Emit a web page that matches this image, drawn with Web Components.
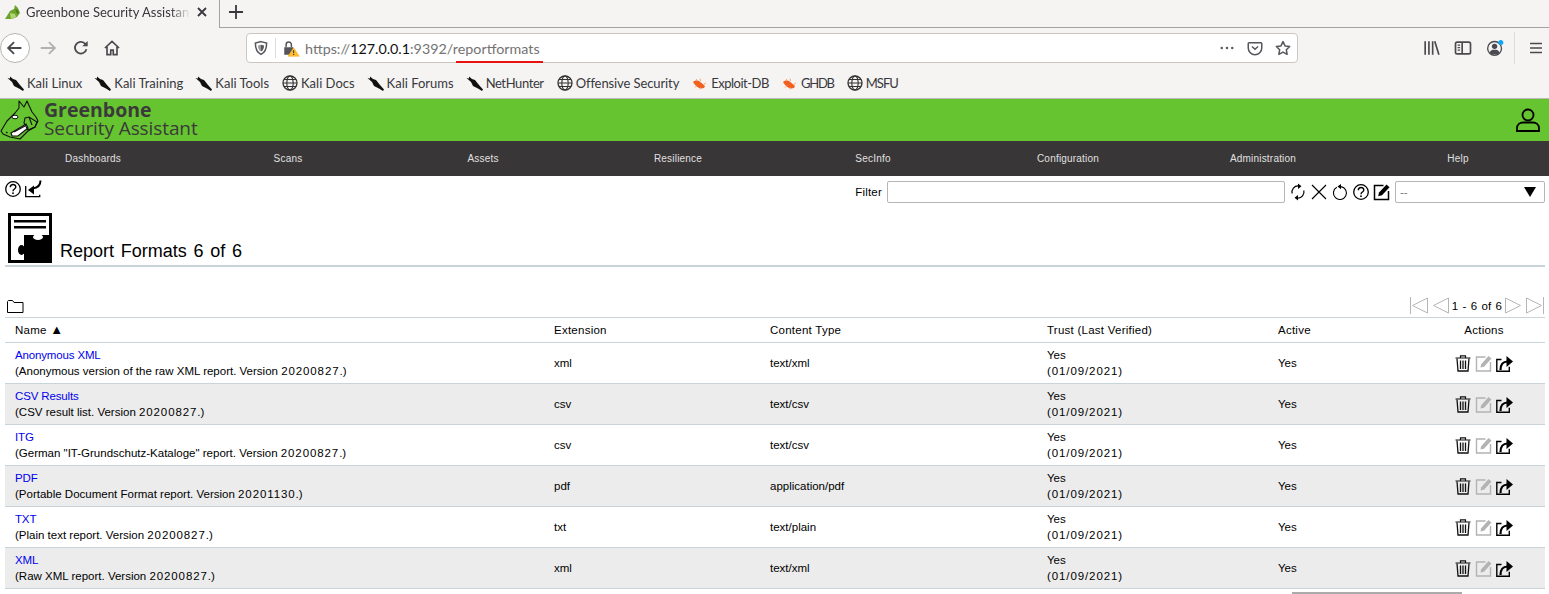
<!DOCTYPE html>
<html lang="en">
<head>
<meta charset="utf-8">
<title>Greenbone Security Assistant</title>
<style>
    html, body { margin: 0; height: 594px; overflow: hidden; background: white; }
    body { font-family: "Liberation Sans", Arial, sans-serif; }
</style>
</head>
<body>
<fx-tabbar title-text="Greenbone Security Assistant"></fx-tabbar>
<fx-navbar></fx-navbar>
<fx-bookmarks>
    <fx-bookmark icon="kali">Kali Linux</fx-bookmark>
    <fx-bookmark icon="kali">Kali Training</fx-bookmark>
    <fx-bookmark icon="kali">Kali Tools</fx-bookmark>
    <fx-bookmark icon="globe">Kali Docs</fx-bookmark>
    <fx-bookmark icon="kali">Kali Forums</fx-bookmark>
    <fx-bookmark icon="kali" style="letter-spacing:-.4px">NetHunter</fx-bookmark>
    <fx-bookmark icon="globe" style="letter-spacing:-.1px">Offensive Security</fx-bookmark>
    <fx-bookmark icon="bug" style="letter-spacing:-.5px">Exploit-DB</fx-bookmark>
    <fx-bookmark icon="bug" style="letter-spacing:-1.200px">GHDB</fx-bookmark>
    <fx-bookmark icon="globe" style="letter-spacing:-1px">MSFU</fx-bookmark>
</fx-bookmarks>
<gsa-header></gsa-header>
<gsa-menu>
    <span>Dashboards</span><span>Scans</span><span>Assets</span><span>Resilience</span>
    <span>SecInfo</span><span>Configuration</span><span>Administration</span><span>Help</span>
</gsa-menu>
<gsa-toolbar></gsa-toolbar>
<gsa-title>Report Formats 6 of 6</gsa-title>
<gsa-pager></gsa-pager>
<format-table>
    <format-row name="Anonymous XML" ext="xml" type="text/xml" version="20200827">(Anonymous version of the raw XML report. Version </format-row>
    <format-row name="CSV Results" ext="csv" type="text/csv" version="20200827">(CSV result list. Version </format-row>
    <format-row name="ITG" ext="csv" type="text/csv" version="20200827">(German "IT-Grundschutz-Kataloge" report. Version </format-row>
    <format-row name="PDF" ext="pdf" type="application/pdf" version="20201130">(Portable Document Format report. Version </format-row>
    <format-row name="TXT" ext="txt" type="text/plain" version="20200827">(Plain text report. Version </format-row>
    <format-row name="XML" ext="xml" type="text/xml" version="20200827">(Raw XML report. Version </format-row>
</format-table>
<gsa-dialog-edge></gsa-dialog-edge>

<script>
const ICONS = {
    back: '<path d="M19 12H5M11 5.500 4.500 12 11 18.500" fill="none" stroke="#4a4a4f" stroke-width="2"/>',
    forward: '<path d="M4 12h15M13 5.500 19.500 12 13 18.500" fill="none" stroke="#b1b1b3" stroke-width="2"/>',
    reload: '<path d="M18.500 13.500A7 7 0 1 1 16.500 6.500L19 9" fill="none" stroke="#4a4a4f" stroke-width="2.200"/><path d="M20 3.500V10h-6.500z" fill="#4a4a4f"/>',
    home: '<path d="M3.500 12 12 4l8.500 8M6 10.500V20h4.500v-5.500h3V20H18v-9.500" fill="none" stroke="#4a4a4f" stroke-width="2"/>',
    shield: '<path d="M12 3.500 19.500 5.500c0 7-1.500 12-7.500 15-6-3-7.500-8-7.500-15z" fill="none" stroke="#55555a" stroke-width="2"/><path d="M12 7.500 16 8.500c0 3.500-1 6.500-4 8z" fill="#55555a"/><path d="M12 7.500 8 8.500c0 3.500 1 6.500 4 8z" fill="#9a9a9e"/>',
    lock: '<path d="M3 11h12v10H3z" fill="#55555a"/><path d="M5.500 11V7.500a3.500 3.500 0 0 1 7 0V11" fill="none" stroke="#55555a" stroke-width="2"/><path d="M15.500 11.500 23 23H8z" fill="#ffbf2e" stroke="#f5a623" stroke-width=".7"/><path d="M14.800 15h1.400v4h-1.400zM14.800 20h1.400v1.400h-1.400z" fill="#333"/>',
    dots: '<circle cx="5" cy="12" r="1.700" fill="#5b5b5f"/><circle cx="12" cy="12" r="1.700" fill="#5b5b5f"/><circle cx="19" cy="12" r="1.700" fill="#5b5b5f"/>',
    pocket: '<path d="M4 5h16a1 1 0 0 1 1 1v6a9 9 0 0 1-18 0V6a1 1 0 0 1 1-1z" fill="none" stroke="#55555a" stroke-width="2"/><path d="M8 10l4 3.700L16 10" fill="none" stroke="#55555a" stroke-width="2"/>',
    star: '<path d="M12 3.500l2.700 5.700 6.200.8-4.500 4.300 1.100 6.200L12 17.500l-5.500 3 1.100-6.200L3.100 10l6.200-.8z" fill="none" stroke="#55555a" stroke-width="2" stroke-linejoin="round"/>',
    library: '<path d="M5 4v16M9.500 4v16M14 4v16M16.500 4l5 16" fill="none" stroke="#4a4a4f" stroke-width="2"/>',
    sidebar: '<rect x="3" y="5" width="18" height="14" rx="2" fill="none" stroke="#4a4a4f" stroke-width="2"/><path d="M11 5v14" stroke="#4a4a4f" stroke-width="2"/><path d="M5.500 8.500h3M5.500 11.500h3M5.500 14.500h3" stroke="#4a4a4f" stroke-width="1.300"/>',
    account: '<circle cx="11.500" cy="12.500" r="8.300" fill="none" stroke="#4a4a4f" stroke-width="1.600"/><circle cx="11.500" cy="10" r="3.200" fill="#4a4a4f"/><path d="M5.500 18c1-3.500 3-4 6-4s5 .5 6 4c-3 2.500-9 2.500-12 0z" fill="#4a4a4f"/><circle cx="19" cy="5.500" r="3" fill="#0fa7f5"/>',
    menu: '<path d="M4 6h16M4 12h16M4 18h16" stroke="#4a4a4f" stroke-width="2"/>',
    kali: '<path d="M.5 4 3 4.500 3 2.500 6 5 9 6l4 5 4 4.500-1 1.500-4-2.500L7 12 5 8z" fill="#111"/>',
    globe: '<circle cx="9" cy="9" r="7" fill="none" stroke="#333" stroke-width="1.300"/><ellipse cx="9" cy="9" rx="3.200" ry="7" fill="none" stroke="#333" stroke-width="1.100"/><path d="M2 9h14M3 5.500h12M3 12.500h12" stroke="#333" stroke-width="1"/>',
    bug: '<path d="M2 8C5 5.500 8 6.500 10 8.500l4 3.500-1 2C9 15.500 5 13.500 2 8z" fill="#f0611f"/><path d="M5 5l2 2M9 4.500l.5 2.500M4 13.500l2-2M15 9l-2.500 1.500M9 15.500l.5-2" stroke="#f5a67c" stroke-width="1"/>',
    help: '<circle cx="9" cy="9" r="7.300" fill="none" stroke="#000" stroke-width="1.300"/><path d="M6.300 7.200c0-3.600 5.500-3.600 5.500-.2 0 2-2.800 2-2.800 4.200" fill="none" stroke="#000" stroke-width="1.400"/><circle cx="9" cy="13.200" r=".9"/>',
    listback: '<path d="M.7 6v10.700h14v-2" fill="none" stroke="#000" stroke-width="1.300"/><path d="M15.500 .5c0 5-3 7.500-8 8" fill="none" stroke="#000" stroke-width="2"/><path d="M3 10 9 5.500v9z"/>',
    refresh: '<path d="M3.200 10.500A6 6 0 0 1 9.500 3M14.800 7.500A6 6 0 0 1 8.500 15" fill="none" stroke="#000" stroke-width="1.200"/><path d="M9 .5l3.500 2.700L9 6zM9 12l-3.500 2.800L9 17.500z"/>',
    cross: '<path d="M2 2l14 14M16 2 2 16" stroke="#000" stroke-width="1.200"/>',
    reset: '<path d="M5.800 4.300a6.500 6.500 0 1 0 4.200-.7" fill="none" stroke="#000" stroke-width="1.100"/><path d="M10 1v5.200L6.500 3.400z"/>',
    editfilter: '<path d="M10.500 2.500H1.500v14h14V8" fill="none" stroke="#000" stroke-width="1.500"/><path d="M6 9.500 13.500 1.500l3 2.800-7.500 8-3.800 1z"/>',
    trash: '<path d="M1.500 4h15M6.500 4V1.800h5V4" fill="none" stroke="#111" stroke-width="1.200"/><path d="M3 4.500 4 17h10l1-12.500" fill="none" stroke="#111" stroke-width="1.300"/><path d="M6.500 6.500v8.500M9 6.500v8.500M11.500 6.500v8.500" stroke="#111" stroke-width="1.300"/>',
    edit: '<path d="M10.500 3H1.500v14h14V8" fill="none" stroke="#b3b3b3" stroke-width="1.400"/><path d="M6 10.500 13.500 2l3 2.500-7.500 8.200-3.500.9z" fill="#b3b3b3"/>',
    export: '<path d="M5.500 5.500H.8v11.700h12.500v-4.500" fill="none" stroke="#000" stroke-width="1.400"/><path d="M4.500 16c0-5.500 2.500-8.500 7-8.500" fill="none" stroke="#000" stroke-width="2.200"/><path d="M10.500 2 17 7.500 10.500 13z"/>',
    first: '<path d="M.5 0v17M17.500 1 2.500 8.500l15 7.500z" fill="none" stroke="#b6b6b6"/>',
    prev: '<path d="M16.500 1 1.500 8.500l15 7.500z" fill="none" stroke="#b6b6b6"/>',
    next: '<path d="M.5 1 15.500 8.500.5 16z" fill="none" stroke="#b6b6b6"/>',
    last: '<path d="M17.500 0v17M.5 1 15.500 8.500.5 16z" fill="none" stroke="#b6b6b6"/>',
    folder: '<path d="M.5 13.500V2.500l1-1h4l1.500 2h9v10z" fill="none" stroke="#000"/>',
    user: '<circle cx="13" cy="8" r="5.500" fill="none" stroke="#000" stroke-width="1.800"/><path d="M2 24v-2.500c0-4 3-6 6-6h10c3 0 6 2 6 6V24z" fill="none" stroke="#000" stroke-width="1.800"/>',
    down: '<path d="M1 2h12L7 12z" fill="#000"/>',
    favicon: '<path d="M0 15 5 7l4-2 1-4 3 3 2 5-3 4-5 2z" fill="#6fa52c"/><path d="M5 9l5 1 1 3-5 2z" fill="#b4d47a"/><path d="M10 5l3 1 1 3-2 1z" fill="#4f7f1c"/>'
};

// generic inline svg icon, <x-icon name="..." size="18" box="18">
class XIcon extends HTMLElement {
    connectedCallback() {
        const size = this.getAttribute('size') || 18;
        const height = this.getAttribute('height') || size;
        const box = this.getAttribute('box') || `0 0 ${size} ${height}`;
        this.attachShadow({ mode: 'open' }).innerHTML = `
            <style>:host { display: block; flex: none; width: ${size}px; height: ${height}px; line-height: 0; }</style>
            <svg width="${size}" height="${height}" viewBox="${box}">${ICONS[this.getAttribute('name')]}</svg>
        `;
    }
}
customElements.define('x-icon', XIcon);

class FxTabbar extends HTMLElement {
    connectedCallback() {
        this.attachShadow({ mode: 'open' }).innerHTML = `
            <style>
                :host { display: flex; height: 28px; background: #f5f4f2; font: 13px Lato, sans-serif; color: #38383d; }
                .tab { display: flex; align-items: center; width: 220px; box-sizing: border-box; padding: 0 0 4px 5px; border-right: 1px solid #a3a3a3; }
                .title { margin-left: 5px; width: 164px; white-space: nowrap; overflow: hidden; -webkit-mask-image: linear-gradient(to right, #000 88%, transparent); }
                .close { margin-left: 6px; }
                .rest { flex: 1; display: flex; align-items: center; padding: 0 0 4px 8px; border-bottom: 1px solid #a3a3a3; }
            </style>
            <div class="tab">
                <x-icon name="favicon" size="16" box="0 0 16 16"></x-icon>
                <span class="title">${this.getAttribute('title-text')}</span>
                <svg class="close" width="12" height="12" viewBox="0 0 12 12"><path d="M2 2l8 8M10 2l-8 8" stroke="#38383d" stroke-width="1.800"/></svg>
            </div>
            <div class="rest">
                <svg width="16" height="16" viewBox="0 0 16 16"><path d="M8 1v14M1 8h14" stroke="#38383d" stroke-width="1.800"/></svg>
            </div>
        `;
    }
}
customElements.define('fx-tabbar', FxTabbar);

class FxNavbar extends HTMLElement {
    connectedCallback() {
        this.attachShadow({ mode: 'open' }).innerHTML = `
            <style>
                :host { display: flex; align-items: center; height: 38px; box-sizing: border-box; padding-top: 2px; background: #f5f4f2; font: 14.300px Lato, sans-serif; }
                .backbtn { flex: none; width: 30px; height: 30px; box-sizing: border-box; border: 1px solid #b5b5b5; border-radius: 50%; background: #fff; display: flex; align-items: center; justify-content: center; }
                .tools { flex: none; display: flex; align-items: center; gap: 12px; margin-left: 7px; width: 209px; }
                .home { margin-left: -1px; }
                .url { flex: none; width: 1052px; height: 30px; box-sizing: border-box; background: #fff; border: 1px solid #cbc7c2; border-radius: 4px; display: flex; align-items: center; padding-left: 5px; position: relative; }
                .sep { width: 1px; height: 20px; background: #dcdcdc; margin: 0 6px 0 5px; }
                .addr { margin-left: 5px; color: #737373; white-space: nowrap; flex: 1; }
                .addr b { font-weight: 400; color: #111; }
                .mark { position: absolute; left: 209px; top: 27px; width: 87px; height: 2px; background: #e8110f; }
                .side { flex: none; display: flex; align-items: center; gap: 12px; margin-left: 123px; }
                .vsep { width: 1px; height: 32px; background: #dcdcdc; margin-left: -3px; }
            </style>
            <div class="backbtn"><x-icon name="back" size="22" box="0 0 24 24"></x-icon></div>
            <div class="tools">
                <x-icon name="forward" size="22" box="0 0 24 24"></x-icon>
                <x-icon name="reload" size="20" box="0 0 24 24"></x-icon>
                <x-icon class="home" name="home" size="20" box="0 0 24 24"></x-icon>
            </div>
            <div class="url">
                <x-icon name="shield" size="18" box="0 0 24 24"></x-icon>
                <span class="sep"></span>
                <x-icon name="lock" size="18" box="0 0 24 24"></x-icon>
                <span class="addr">https://<b>127.0.0.1</b>:9392/reportformats</span>
                <x-icon name="dots" size="18" box="0 0 24 24"></x-icon>
                <x-icon name="pocket" size="18" box="0 0 24 24" style="margin-left:10px"></x-icon>
                <x-icon name="star" size="18" box="0 0 24 24" style="margin:0 5px 0 10px"></x-icon>
                <span class="mark"></span>
            </div>
            <div class="side">
                <x-icon name="library" size="20" box="0 0 24 24"></x-icon>
                <x-icon name="sidebar" size="20" box="0 0 24 24"></x-icon>
                <x-icon name="account" size="20" box="0 0 24 24"></x-icon>
                <span class="vsep"></span>
                <x-icon name="menu" size="18" box="0 0 24 24"></x-icon>
            </div>
        `;
    }
}
customElements.define('fx-navbar', FxNavbar);

class FxBookmarks extends HTMLElement {
    connectedCallback() {
        this.attachShadow({ mode: 'open' }).innerHTML = `
            <style>
                :host { display: block; height: 33px; box-sizing: border-box; padding-top: 2px; background: #f5f4f2; border-bottom: 1px solid #b9b9b9; }
                .bar { display: flex; align-items: center; height: 30px; gap: 12px; padding-left: 7px; }
            </style>
            <div class="bar"><slot></slot></div>
        `;
    }
}
customElements.define('fx-bookmarks', FxBookmarks);

class FxBookmark extends HTMLElement {
    connectedCallback() {
        this.attachShadow({ mode: 'open' }).innerHTML = `
            <style>
                :host { display: flex; align-items: center; gap: 2px; font: 13px Lato, sans-serif; color: #38383d; white-space: nowrap; }
            </style>
            <x-icon name="${this.getAttribute('icon')}" size="18" box="0 0 18 18"></x-icon>
            <slot></slot>
        `;
    }
}
customElements.define('fx-bookmark', FxBookmark);

class GsaHeader extends HTMLElement {
    connectedCallback() {
        this.attachShadow({ mode: 'open' }).innerHTML = `
            <style>
                :host { display: flex; align-items: center; height: 42px; background: #66c430; color: #3b3a3a; }
                .brand { margin-left: 3px; padding-bottom: 3px; font-family: "Open Sans", sans-serif; white-space: nowrap; }
                .brand div:first-child { font-size: 19.500px; font-weight: 700; line-height: 18px; }
                .brand div:last-child { font-size: 19px; line-height: 18px; letter-spacing: -.1px; }
                .user { margin-left: auto; margin-right: 8px; }
            </style>
            <svg width="41" height="42" viewBox="0 0 41 42">
                <path d="M1 32 7 22 15 14 19 9 19 2 24 8 27 2 32 13 36 18 38 22 35 28 28 32 20 40 10 38 3 35z" fill="#66c430" stroke="#111" stroke-width="1.100" stroke-linejoin="round"/>
                <ellipse cx="15" cy="18" rx="3" ry="1.800" fill="#fff" stroke="#111"/>
                <path d="M11 34 26 25 28 29 18 37 12 37z" fill="#fff" stroke="#111" stroke-width="1.200"/>
                <path d="M14 33l11-6M25 19l4-1 8 5-2 5-7 3-4-7zM29 18l3 8" fill="none" stroke="#111" stroke-width="1.100"/>
                <path d="M6 33l1.500 1" stroke="#111" stroke-width="1.400"/>
            </svg>
            <div class="brand"><div>Greenbone</div><div>Security Assistant</div></div>
            <x-icon class="user" name="user" size="26" box="0 0 26 26"></x-icon>
        `;
    }
}
customElements.define('gsa-header', GsaHeader);

class GsaMenu extends HTMLElement {
    connectedCallback() {
        this.attachShadow({ mode: 'open' }).innerHTML = `
            <style>
                :host { display: block; height: 35px; background: #393637; overflow: hidden; }
                .items { display: grid; grid-template-columns: repeat(8, 195px); margin-left: -4.500px; height: 35px; align-items: center; justify-items: center; color: #e0e0e0; font: 10px "Liberation Sans", sans-serif; letter-spacing: .2px; }
                ::slotted(span) { display: block; }
            </style>
            <div class="items"><slot></slot></div>
        `;
    }
}
customElements.define('gsa-menu', GsaMenu);

class GsaToolbar extends HTMLElement {
    connectedCallback() {
        this.attachShadow({ mode: 'open' }).innerHTML = `
            <style>
                :host { display: flex; height: 37px; box-sizing: border-box; padding: 4px 4px 0 4px; font: 11.500px "Liberation Sans", sans-serif; color: #000; }
                .left { display: flex; gap: 3px; height: 18px; }
                .filter { margin-left: auto; margin-top: 1px; display: flex; align-items: flex-start; }
                label { line-height: 22px; margin-right: 5px; letter-spacing: .2px; }
                .input { width: 398px; height: 22px; box-sizing: border-box; border: 1px solid #b5b5b5; border-radius: 2px; margin-right: 4px; }
                .icons { display: flex; gap: 3px; margin-top: 2px; }
                .select { width: 150px; height: 22px; box-sizing: border-box; border: 1px solid #b5b5b5; border-radius: 2px; margin-left: 4px; display: flex; align-items: center; justify-content: space-between; padding: 0 7px 0 4px; color: #777; }
            </style>
            <div class="left">
                <x-icon name="help"></x-icon>
                <x-icon name="listback"></x-icon>
            </div>
            <div class="filter">
                <label>Filter</label>
                <div class="input"></div>
                <div class="icons">
                    <x-icon name="refresh"></x-icon>
                    <x-icon name="cross"></x-icon>
                    <x-icon name="reset"></x-icon>
                    <x-icon name="help"></x-icon>
                    <x-icon name="editfilter"></x-icon>
                </div>
                <div class="select"><span>--</span><x-icon name="down" size="14" box="0 0 14 14"></x-icon></div>
            </div>
        `;
    }
}
customElements.define('gsa-toolbar', GsaToolbar);

class GsaTitle extends HTMLElement {
    connectedCallback() {
        this.attachShadow({ mode: 'open' }).innerHTML = `
            <style>
                :host { display: block; margin: 0 4px 0 5px; }
                .head { display: flex; align-items: flex-end; height: 52px; border-bottom: 2px solid #c8d3da; padding-left: 3px; }
                .text { margin-left: 8px; font: 18px "Liberation Sans", sans-serif; line-height: 24px; padding-bottom: 2px; color: #000; word-spacing: 1.750px; }
                svg { margin-bottom: 2px; }
            </style>
            <div class="head">
                <svg width="44" height="50" viewBox="0 0 44 50">
                    <path d="M0 0h44v50H0z"/>
                    <path d="M3 3h38v19H16v25H3z" fill="#fff"/>
                    <path d="M6 7h32v2.500H6zM6 13h32v2.500H6z"/>
                    <ellipse cx="30" cy="24" rx="5" ry="3" fill="#fff"/>
                    <ellipse cx="13.500" cy="37" rx="3.500" ry="5"/>
                </svg>
                <span class="text"><slot></slot></span>
            </div>
        `;
    }
}
customElements.define('gsa-title', GsaTitle);

class GsaPager extends HTMLElement {
    connectedCallback() {
        this.attachShadow({ mode: 'open' }).innerHTML = `
            <style>
                :host { display: flex; align-items: flex-end; height: 50px; margin: 0 4px 0 5px; padding: 0 0 3px 2px; box-sizing: border-box; font: 11.500px "Liberation Sans", sans-serif; color: #000; }
                .nav { margin-left: auto; display: flex; align-items: center; gap: 4px; margin-right: 1px; }
                span { margin: 0 -1px; word-spacing: 1.200px; }
            </style>
            <x-icon name="folder" size="17" height="15" box="0 0 17 15"></x-icon>
            <div class="nav">
                <x-icon name="first" size="18" height="17" box="0 0 18 17"></x-icon>
                <x-icon name="prev" size="17" height="17" box="0 0 17 17"></x-icon>
                <span>1 - 6 of 6</span>
                <x-icon name="next" size="17" height="17" box="0 0 17 17"></x-icon>
                <x-icon name="last" size="18" height="17" box="0 0 18 17"></x-icon>
            </div>
        `;
    }
}
customElements.define('gsa-pager', GsaPager);

const COLUMNS = '539px 216px 277px 231px 155px 122px';

class FormatTable extends HTMLElement {
    connectedCallback() {
        this.attachShadow({ mode: 'open' }).innerHTML = `
            <style>
                :host { display: block; margin: 0 4px 0 5px; border-top: 1px solid #c8d3da; font: 11.500px "Liberation Sans", sans-serif; color: #000; }
                .head { display: grid; grid-template-columns: ${COLUMNS}; height: 24px; align-items: center; border-bottom: 1px solid #c8d3da; letter-spacing: .25px; }
                .head > div { padding-left: 10px; line-height: 14px; }
                .head > div:last-child { padding: 0; text-align: center; }
                .tri { font-size: 13px; line-height: 0; }
            </style>
            <div class="head">
                <div>Name <span class="tri">▲</span></div><div>Extension</div><div>Content Type</div>
                <div>Trust (Last Verified)</div><div>Active</div><div>Actions</div>
            </div>
            <slot></slot>
        `;
    }
}
customElements.define('format-table', FormatTable);

class FormatRow extends HTMLElement {
    connectedCallback() {
        const version = this.getAttribute('version');
        this.attachShadow({ mode: 'open' }).innerHTML = `
            <style>
                :host { display: grid; grid-template-columns: ${COLUMNS}; height: 41px; box-sizing: border-box; align-items: center; border-bottom: 1px solid #c8d3da; line-height: 16px; }
                :host(:nth-child(even)) { background: #ececec; }
                .cell { padding-left: 10px; }
                a { color: #0000ee; text-decoration: none; display: block; letter-spacing: -.15px; }
                .num { letter-spacing: .9px; }
                .actions { display: flex; justify-content: center; gap: 3px; padding: 0 1px 0 0; }
            </style>
            <div class="cell"><a href="#">${this.getAttribute('name')}</a><slot></slot><span class="num">${version}</span>.)</div>
            <div class="cell">${this.getAttribute('ext')}</div>
            <div class="cell">${this.getAttribute('type')}</div>
            <div class="cell">Yes<br><span class="num">(01/09/2021)</span></div>
            <div class="cell">Yes</div>
            <div class="cell actions">
                <x-icon name="trash"></x-icon>
                <x-icon name="edit"></x-icon>
                <x-icon name="export"></x-icon>
            </div>
        `;
    }
}
customElements.define('format-row', FormatRow);

class GsaDialogEdge extends HTMLElement {
    connectedCallback() {
        this.attachShadow({ mode: 'open' }).innerHTML = `
            <style>:host { display: block; width: 170px; height: 2px; margin: 3px 0 0 1292px; background: #ababab; }</style>
        `;
    }
}
customElements.define('gsa-dialog-edge', GsaDialogEdge);
</script>
</body>
</html>
